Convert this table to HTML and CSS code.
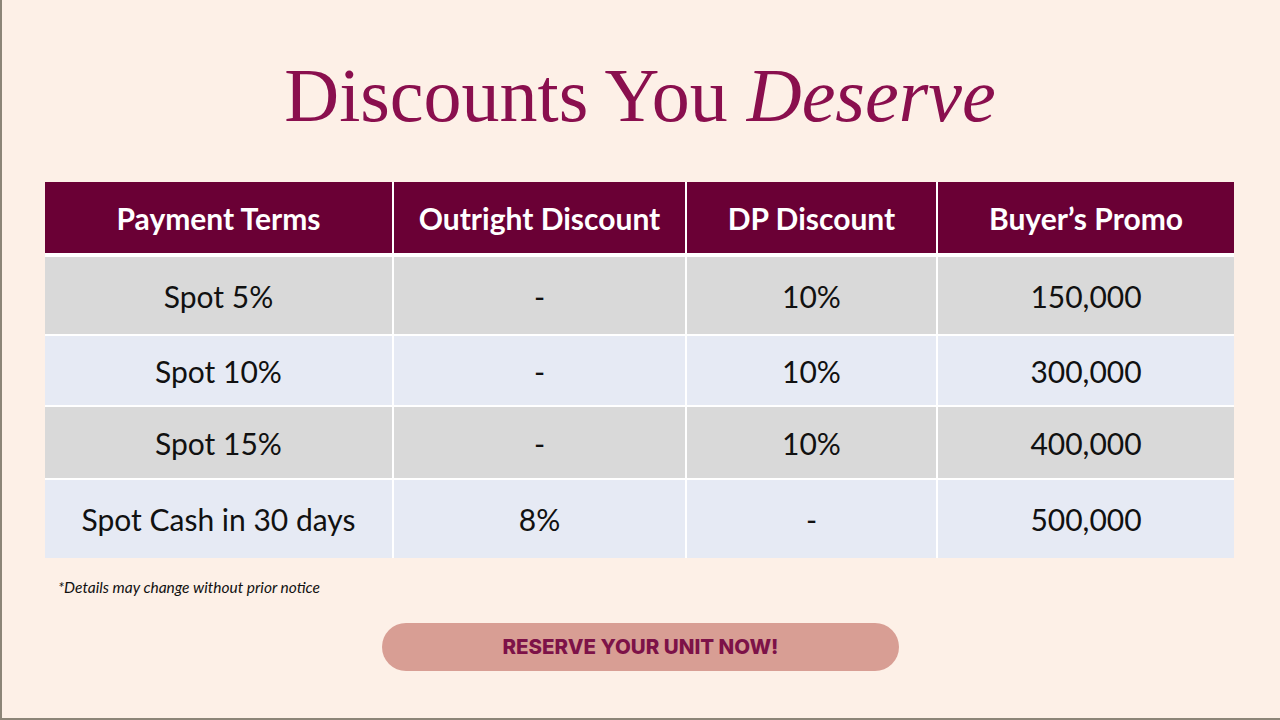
FILE: index.html
```html
<!DOCTYPE html>
<html lang="en">
<head>
    <meta charset="UTF-8">
    <meta name="viewport" content="width=device-width, initial-scale=1.0">
    <title>Discounts You Deserve</title>
    <link rel="stylesheet" href="styles.css">
</head>
<body>
    <div class="slide">
        <h1>Discounts You <em>Deserve</em></h1>

        <table class="discounts">
            <colgroup>
                <col class="col-terms">
                <col class="col-outright">
                <col class="col-dp">
                <col>
            </colgroup>
            <thead>
                <tr>
                    <th>Payment Terms</th>
                    <th>Outright Discount</th>
                    <th>DP Discount</th>
                    <th>Buyer’s Promo</th>
                </tr>
            </thead>
            <tbody>
                <tr class="row-grey row-1">
                    <td>Spot 5%</td>
                    <td>-</td>
                    <td>10%</td>
                    <td>150,000</td>
                </tr>
                <tr class="row-blue row-2">
                    <td>Spot 10%</td>
                    <td>-</td>
                    <td>10%</td>
                    <td>300,000</td>
                </tr>
                <tr class="row-grey row-3">
                    <td>Spot 15%</td>
                    <td>-</td>
                    <td>10%</td>
                    <td>400,000</td>
                </tr>
                <tr class="row-blue row-4">
                    <td>Spot Cash in 30 days</td>
                    <td>8%</td>
                    <td>-</td>
                    <td>500,000</td>
                </tr>
            </tbody>
        </table>

        <p class="note">*Details may change without prior notice</p>

        <div class="cta">
            <a href="#">RESERVE YOUR UNIT NOW!</a>
        </div>
    </div>
</body>
</html>
```

FILE: styles.css
```css
body {
    margin: 0;
    background-color: #fdf0e7;
    font-family: Lato, "Open Sans", sans-serif;
}
.slide {
    width: 1280px;
    height: 720px;
    box-sizing: border-box;
    border-left: 2px solid #8c8578;
    border-bottom: 2px solid #8c8578;
    padding: 52px 45px 0 43px;
}
h1 {
    margin: 0;
    text-align: center;
    font-family: "Liberation Serif", serif;
    font-weight: normal;
    font-size: 76px;
    line-height: 86px;
    color: #8a0f4e;
}
h1 em {
    font-style: italic;
}
.discounts {
    margin-top: 44px;
    width: 1189px;
    border-collapse: collapse;
    table-layout: fixed;
}
.col-terms { width: 348px; }
.col-outright { width: 293px; }
.col-dp { width: 251px; }
.discounts th,
.discounts td {
    border: 2px solid #ffffff;
    text-align: center;
    color: #111;
}
.discounts th {
    background-color: #6a0035;
    color: #fff;
    font-weight: bold;
    font-size: 30px;
    height: 69px;
    border-bottom-width: 4px;
    border-top: none;
}
.discounts td {
    font-size: 30px;
}
.row-1 td { height: 75px; }
.row-2 td { height: 67px; }
.row-3 td { height: 69px; }
.row-4 td {
    height: 76px;
    border-bottom: none;
}
.discounts th:first-child,
.discounts td:first-child { border-left: none; }
.discounts th:last-child,
.discounts td:last-child { border-right: none; }
.row-grey td {
    background-color: #d9d9d9;
}
.row-blue td {
    background-color: #e6eaf4;
}
.note {
    margin: 20px 0 0 13px;
    font-size: 15.5px;
    font-style: italic;
    color: #111;
}
.cta {
    margin-top: 27px;
    text-align: center;
}
.cta a {
    display: inline-block;
    width: 517px;
    padding: 11px 0;
    margin-left: 1px;
    background-color: #d89e94;
    border-radius: 24px;
    color: #7d1248;
    font-family: Inter, sans-serif;
    font-weight: 800;
    font-size: 20.5px;
    line-height: 26px;
    text-decoration: none;
}
```
